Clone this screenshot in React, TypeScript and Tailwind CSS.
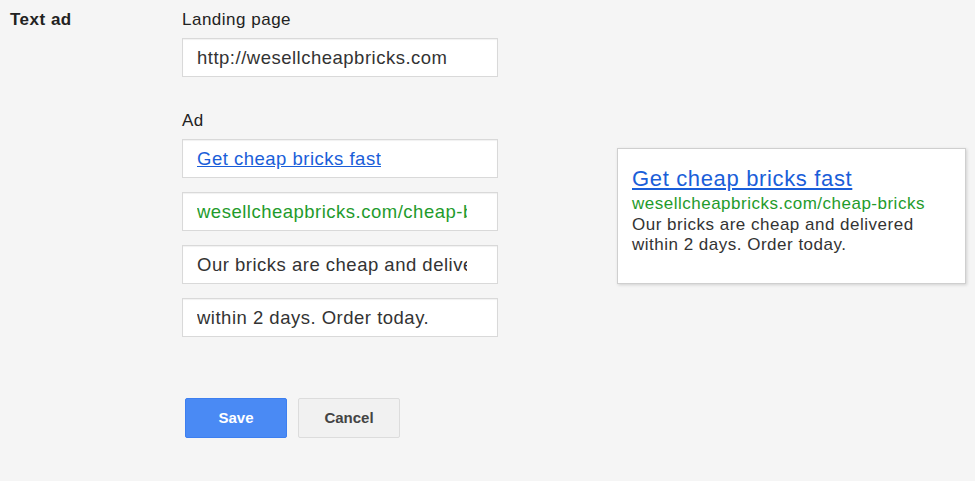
const font = { fontFamily: '"Liberation Sans", Arial, Helvetica, sans-serif' };

function Field({ children, className = "" }: { children: React.ReactNode; className?: string }) {
  return (
    <div className="flex h-[39px] w-[316px] items-center overflow-hidden border border-[#d9d9d9] bg-white pl-[14px] pr-[30px] shadow-[inset_0_1px_1px_rgba(0,0,0,0.06)]">
      <div className={`overflow-hidden whitespace-nowrap text-[18.5px] leading-6 tracking-[0.5px] ${className}`}>
        {children}
      </div>
    </div>
  );
}

export default function App() {
  return (
    <div className="flex h-[481px] w-[975px] bg-[#f5f5f5] pt-[10px] text-[#333]" style={font}>
      <div className="w-[182px] pl-[10px] text-[17px] font-bold leading-5 tracking-[0.5px] text-[#222]">Text ad</div>

      <div className="flex w-[316px] flex-col">
        <div className="mb-[8px] text-[17px] leading-5 tracking-[0.5px] text-[#222]">Landing page</div>
        <Field className="text-[#333]">http://wesellcheapbricks.com</Field>

        <div className="mb-[8px] mt-[34px] text-[17px] leading-5 tracking-[0.5px] text-[#222]">Ad</div>
        <div className="flex flex-col gap-[14px]">
          <Field className="text-[#1a5ed9] underline">Get cheap bricks fast</Field>
          <Field className="text-[#1f9b2c]">wesellcheapbricks.com/cheap-bricks</Field>
          <Field className="text-[#333]">Our bricks are cheap and delivered</Field>
          <Field className="text-[#333]">within 2 days. Order today.</Field>
        </div>

        <div className="ml-[3px] mt-[61px] flex gap-[11px]">
          <button className="h-10 w-[102px] rounded-[2px] border border-[#3d7ff0] bg-[#4a8af4] text-[15px] font-bold text-white">
            Save
          </button>
          <button className="h-10 w-[102px] rounded-[2px] border border-[#dcdcdc] bg-[#f1f1f1] text-[15px] font-bold text-[#444]">
            Cancel
          </button>
        </div>
      </div>

      <div className="ml-[119px] mt-[138px] self-start">
        <div className="h-[136px] w-[349px] border border-[#cfcfcf] bg-white px-[14px] pt-[17px] shadow-[1px_1px_3px_rgba(0,0,0,0.15)]">
          <div className="text-[22px] leading-[26px] tracking-[0.65px] text-[#1a5ed9] underline">Get cheap bricks fast</div>
          <div className="mt-[1px] text-[17px] leading-[22px] tracking-[0.5px] text-[#1f9b2c]">
            wesellcheapbricks.com/cheap-bricks
          </div>
          <div className="text-[17px] leading-5 tracking-[0.5px] text-[#333]">
            Our bricks are cheap and delivered
            <br />
            within 2 days. Order today.
          </div>
        </div>
      </div>
    </div>
  );
}
